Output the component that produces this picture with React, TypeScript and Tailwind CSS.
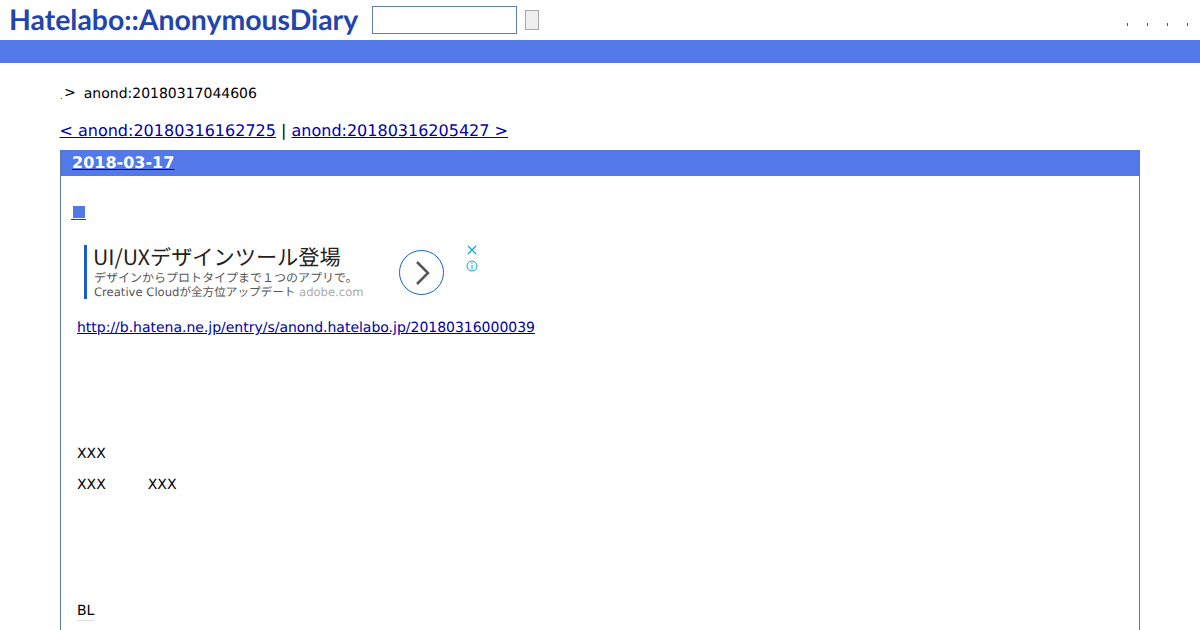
import React from 'react';

const FONT = { fontFamily: '"DejaVu Sans", "Noto Sans CJK JP", sans-serif' };

const Ad: React.FC = () => (
  <div className="flex ml-[23px] mt-[24px] h-[55px] w-[400px] relative">
    <div className="w-[3px] h-[54px] bg-[#1a5fc4] mt-[1px]"></div>
    <div className="ml-[6px] flex flex-col text-[#333]">
      <div className="text-[21.2px] leading-[24px] mt-[1px] text-[#222] whitespace-nowrap font-['Noto_Sans_CJK_JP']">UI/UXデザインツール登場</div>
      <div className="text-[12px] leading-[14px] mt-[2px] text-[#555] whitespace-nowrap ml-[1px] font-['Noto_Sans_CJK_JP']">デザインからプロトタイプまで１つのアプリで。</div>
      <div className="text-[11.6px] leading-[14px] text-[#555] whitespace-nowrap ml-[1px]">
        Creative Cloudが全方位アップデート <span className="text-[#aaa]">adobe.com</span>
      </div>
    </div>
    <div className="absolute left-[315px] top-[6px] w-[45px] h-[45px] rounded-full border border-[#1a5fc4] flex items-center justify-center">
      <svg width="18" height="26" viewBox="0 0 18 26" fill="none" stroke="#555" strokeWidth="2.5">
        <path d="M4 2 L15 13 L4 24" />
      </svg>
    </div>
    <svg className="absolute left-[383px] top-[1px]" width="10" height="10" viewBox="0 0 10 10" stroke="#00aecd" strokeWidth="1.2">
      <path d="M1 1 L9 9 M9 1 L1 9" />
    </svg>
    <svg className="absolute left-[382px] top-[16px]" width="12" height="12" viewBox="0 0 12 12" fill="none" stroke="#00aecd" strokeWidth="1">
      <circle cx="6" cy="6" r="5" />
      <path d="M6 5 V9.5 M6 2.5 V4" />
    </svg>
  </div>
);

const App: React.FC = () => {
  return (
    <div className="w-[1200px] h-[630px] overflow-hidden bg-white text-black [text-rendering:geometricPrecision]" style={FONT}>
      <header className="h-[40px] flex items-start relative">
        <div className="ml-[9px] mt-[3px] w-[351px] text-[28.4px] leading-[34px] font-bold text-[#1f45ae] whitespace-nowrap font-['Lato']">
          Hatelabo::AnonymousDiary
        </div>
        <input className="ml-[12px] mt-[6px] w-[145px] h-[28px] border border-[#5f7fb5] bg-white" />
        <button className="ml-[8px] mt-[10px] w-[14px] h-[20px] border border-[#a9a9a9] bg-[#efefef]"></button>
        <div className="ml-auto mr-[12px] mt-[23px] flex gap-[19px]">
          <span className="w-px h-[3px] bg-[#555]"></span>
          <span className="w-px h-[3px] bg-[#555]"></span>
          <span className="w-px h-[3px] bg-[#555]"></span>
          <span className="w-px h-[3px] bg-[#555]"></span>
        </div>
      </header>
      <div className="h-[23px] bg-[#5279e7]"></div>

      <div className="mx-[60px]">
        <div className="mt-[22px] h-[18px] flex items-center text-[14px] leading-[18px]">
          <span className="w-[4px] text-[8px] leading-none mt-[6px]">.</span>
          <span className="-mt-[2px]">&gt;</span>
          <span className="ml-[8px]">anond:20180317044606</span>
        </div>
        <div className="mt-[17px] h-[22px] text-[16px] leading-[21px] -ml-[0.5px]">
          <a className="text-[#0000aa] underline">&lt; anond:20180316162725</a>
          {' | '}
          <a className="text-[#0000aa] underline">anond:20180316205427 &gt;</a>
        </div>

        <div className="mt-[8px] border border-[#5d78b0] border-t-0">
          <div className="h-[26px] bg-[#5279e7] pl-[11px] text-[16px] leading-[26px] font-bold text-white">
            <span className="underline decoration-[#0000b4]">2018-03-17</span>
          </div>
          <div className="h-[500px]">
            <div className="ml-[10px] mt-[30px] h-[14px] w-[15px] border-b border-[#1f3fb0] flex justify-center">
              <div className="w-[12px] h-[12px] bg-[#5279e7]"></div>
            </div>
            <Ad />
            <div className="ml-[16px] mt-[20px] text-[14px] leading-[18px] tracking-[-0.016px]">
              <a className="text-[#0000aa] underline">http://b.hatena.ne.jp/entry/s/anond.hatelabo.jp/20180316000039</a>
            </div>
            <div className="ml-[16px] mt-[108px] text-[14px] leading-[18px]">XXX</div>
            <div className="ml-[16px] mt-[13px] text-[14px] leading-[18px] flex gap-[42px]">
              <span>XXX</span>
              <span>XXX</span>
            </div>
            <div className="ml-[16px] mt-[108px] text-[14px] leading-[18px]">
              <span className="border-b border-[#ddd] pb-[1px]">BL</span>
            </div>
          </div>
        </div>
      </div>
    </div>
  );
};

export default App;
